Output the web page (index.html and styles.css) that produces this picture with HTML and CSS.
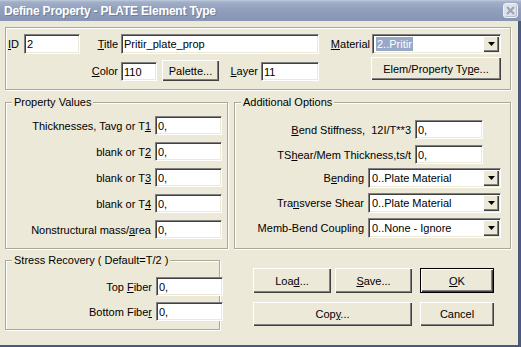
FILE: index.html
```html
<!DOCTYPE html>
<html lang="en">

<head>
    <meta charset="UTF-8">
    <title>Define Property - PLATE Element Type</title>
    <link rel="stylesheet" href="styles.css">
</head>

<body>
    <div class="window">
        <div class="titlebar">
            <span class="caption">Define Property - PLATE Element Type</span>
            <span class="close-btn">
                <svg width="9" height="9" viewBox="0 0 9 9"><path d="M1 1 L8 8 M8 1 L1 8" stroke="#9aa4b6" stroke-width="2" /></svg>
            </span>
        </div>

        <div class="client">
            <!-- ID / title / material -->
            <div class="group top-group">
                <div class="row row-1">
                    <label class="lbl lbl-id"><u>I</u>D</label>
                    <input class="edit w-id" type="text" value="2">
                    <label class="lbl lbl-title"><u>T</u>itle</label>
                    <input class="edit w-title" type="text" value="Pritir_plate_prop">
                    <label class="lbl lbl-material"><u>M</u>aterial</label>
                    <div class="combo w-material">
                        <span class="combo-text"><span class="selected">2..Pritir</span></span>
                        <span class="combo-btn"><svg width="7" height="4" viewBox="0 0 7 4"><path d="M0 0 H7 L3.5 4 Z" fill="#000" /></svg></span>
                    </div>
                </div>
                <div class="row row-2">
                    <label class="lbl lbl-color"><u>C</u>olor</label>
                    <input class="edit w-color" type="text" value="110">
                    <button class="btn btn-palette">Palette...</button>
                    <label class="lbl lbl-layer"><u>L</u>ayer</label>
                    <input class="edit w-layer" type="text" value="11">
                    <button class="btn btn-elem">Elem/Property Ty<u>p</u>e...</button>
                </div>
            </div>

            <div class="middle">
                <fieldset class="group prop-values">
                    <legend>Property Values</legend>
                    <div class="field-rows">
                        <div class="field-row"><label>Thicknesses, Tavg or T<u>1</u></label><input class="edit w-val" type="text" value="0,"></div>
                        <div class="field-row"><label>blank or T<u>2</u></label><input class="edit w-val" type="text" value="0,"></div>
                        <div class="field-row"><label>blank or T<u>3</u></label><input class="edit w-val" type="text" value="0,"></div>
                        <div class="field-row"><label>blank or T<u>4</u></label><input class="edit w-val" type="text" value="0,"></div>
                        <div class="field-row"><label>Nonstructural mass/<u>a</u>rea</label><input class="edit w-val" type="text" value="0,"></div>
                    </div>
                </fieldset>

                <fieldset class="group add-options">
                    <legend>Additional Options</legend>
                    <div class="field-rows opt-rows">
                        <div class="field-row"><label><u>B</u>end Stiffness,&nbsp; 12I/T**3</label><input class="edit w-opt" type="text" value="0,"></div>
                        <div class="field-row"><label>TS<u>h</u>ear/Mem Thickness,ts/t</label><input class="edit w-opt" type="text" value="0,"></div>
                        <div class="field-row first-combo">
                            <label>B<u>e</u>nding</label>
                            <div class="combo w-opt-combo">
                                <span class="combo-text">0..Plate Material</span>
                                <span class="combo-btn"><svg width="7" height="4" viewBox="0 0 7 4"><path d="M0 0 H7 L3.5 4 Z" fill="#000" /></svg></span>
                            </div>
                        </div>
                        <div class="field-row">
                            <label>Tra<u>n</u>sverse Shear</label>
                            <div class="combo w-opt-combo">
                                <span class="combo-text">0..Plate Material</span>
                                <span class="combo-btn"><svg width="7" height="4" viewBox="0 0 7 4"><path d="M0 0 H7 L3.5 4 Z" fill="#000" /></svg></span>
                            </div>
                        </div>
                        <div class="field-row">
                            <label>Memb-Bend Coupling</label>
                            <div class="combo w-opt-combo">
                                <span class="combo-text">0..None - Ignore</span>
                                <span class="combo-btn"><svg width="7" height="4" viewBox="0 0 7 4"><path d="M0 0 H7 L3.5 4 Z" fill="#000" /></svg></span>
                            </div>
                        </div>
                    </div>
                </fieldset>
            </div>

            <div class="bottom">
                <fieldset class="group stress">
                    <legend>Stress Recovery ( Default=T/2 )</legend>
                    <div class="field-rows stress-rows">
                        <div class="field-row"><label>Top <u>F</u>iber</label><input class="edit w-val" type="text" value="0,"></div>
                        <div class="field-row"><label>Bottom Fibe<u>r</u></label><input class="edit w-val" type="text" value="0,"></div>
                    </div>
                </fieldset>

                <div class="buttons">
                    <button class="btn">Loa<u>d</u>...</button>
                    <button class="btn"><u>S</u>ave...</button>
                    <button class="btn btn-default btn-right"><u>O</u>K</button>
                    <button class="btn btn-copy">Cop<u>y</u>...</button>
                    <button class="btn btn-right">Cancel</button>
                </div>
            </div>
        </div>
    </div>
</body>

</html>
```

FILE: styles.css
```css
body {
    margin: 0;
    padding: 0;
    font-family: "Liberation Sans", Arial, sans-serif;
    font-size: 11px;
    color: #000000;
    background-color: #ece9d8;
}

.window {
    width: 521px;
    height: 347px;
    display: flex;
    flex-direction: column;
    overflow: hidden;
}

/* title bar */
.titlebar {
    flex: none;
    height: 21px;
    display: flex;
    align-items: center;
    justify-content: space-between;
    padding: 0 3px 0 4px;
    background: linear-gradient(#c3cbdc 0, #a2afc8 2px, #919fbc 45%, #8796b4 100%);
}

.caption {
    color: #ffffff;
    font-weight: bold;
    font-size: 12px;
    letter-spacing: -0.2px;
    text-shadow: 1px 1px 0 #6f7d99;
}

.close-btn {
    width: 15px;
    height: 15px;
    box-sizing: border-box;
    display: flex;
    align-items: center;
    justify-content: center;
    border: 1px solid #eef0f4;
    border-radius: 3px;
    background: #dde1e9;
    box-shadow: inset -1px -1px 0 #b9c0cd;
}

.client {
    flex: 1;
    border-right: 3px solid #4b5a7a;
    border-bottom: 2px solid #4b5a7a;
    padding: 6px 0 0 5px;
}

/* etched group boxes */
.group {
    box-sizing: border-box;
    margin: 0;
    padding: 0;
    min-width: 0;
    border: 1px solid #aca899;
    box-shadow: 1px 1px 0 #ffffff, inset 1px 1px 0 #ffffff;
}

.group legend {
    margin-left: 6px;
    padding: 0 2px;
    line-height: 13px;
    background-color: #ece9d8;
}

/* sunken edit fields */
.edit {
    box-sizing: border-box;
    height: 19px;
    margin: 0;
    padding: 0 2px;
    font-family: "Liberation Sans", Arial, sans-serif;
    font-size: 11px;
    color: #000000;
    background: #ffffff;
    border: 1px solid;
    border-color: #808080 #ffffff #ffffff #808080;
    box-shadow: inset 1px 1px 0 #404040, inset -1px -1px 0 #ece9d8;
    outline: none;
}

.combo {
    box-sizing: border-box;
    height: 20px;
    display: flex;
    align-items: stretch;
    background: #ffffff;
    border: 1px solid;
    border-color: #808080 #ffffff #ffffff #808080;
    box-shadow: inset 1px 1px 0 #404040, inset -1px -1px 0 #ece9d8;
    padding: 1px;
}

.combo-text {
    flex: 1;
    display: flex;
    align-items: center;
    padding-left: 2px;
}

.selected {
    background: #98a8c8;
    color: #ffffff;
    padding: 0 1px;
    line-height: 14px;
}

.combo-btn {
    width: 16px;
    box-sizing: border-box;
    display: flex;
    align-items: center;
    justify-content: center;
    background: #ece9d8;
    box-shadow: inset 1px 1px 0 #ffffff, inset -1px -1px 0 #404040, inset -2px -2px 0 #808080;
}

/* raised push buttons */
.btn {
    box-sizing: border-box;
    margin: 0;
    padding: 0;
    font-family: "Liberation Sans", Arial, sans-serif;
    font-size: 11px;
    color: #000000;
    background: #ece9d8;
    border: none;
    box-shadow: inset 1px 1px 0 #ffffff, inset -1px -1px 0 #404040, inset -2px -2px 0 #808080;
}

.btn-default {
    border: 1px solid #000000;
}

/* top group */
.top-group {
    width: 506px;
    height: 63px;
    padding-top: 6px;
}

.row {
    display: flex;
    align-items: flex-start;
}

.lbl {
    box-sizing: border-box;
    line-height: 19px;
    text-align: right;
    padding-right: 3px;
}

.row-1 .edit {
    height: 20px;
}

.row-1 .lbl {
    line-height: 20px;
}

.lbl-id {
    width: 18px;
    text-align: left;
    padding-left: 2px;
}

.w-id {
    width: 56px;
}

.lbl-title {
    width: 41px;
}

.w-title {
    width: 198px;
}

.lbl-material {
    width: 53px;
    padding-right: 2px;
}

.w-material {
    width: 129px;
}

.row-2 {
    margin-top: 3px;
}

.row-2 .lbl,
.row-2 .edit {
    margin-top: 5px;
}

.lbl-color {
    width: 115px;
}

.w-color {
    width: 36px;
}

.btn-palette {
    width: 57px;
    height: 21px;
    margin-left: 5px;
    margin-top: 3px;
}

.lbl-layer {
    width: 42px;
}

.w-layer {
    width: 58px;
}

.btn-elem {
    width: 130px;
    height: 23px;
    margin-left: 52px;
}

/* property + options groups */
.middle {
    display: flex;
    margin-top: 6px;
}

.prop-values {
    width: 223px;
    height: 153px;
}

.add-options {
    width: 277px;
    height: 153px;
    margin-left: 6px;
}

.field-rows {
    display: flex;
    flex-direction: column;
    gap: 7px;
    padding: 7px 5px 0 0;
}

.field-row {
    display: flex;
    justify-content: flex-end;
    align-items: center;
    height: 19px;
}

.field-row label {
    margin-right: 4px;
}

.w-val {
    width: 67px;
}

.opt-rows {
    gap: 6px;
    padding: 11px 9px 0 0;
}

.w-opt {
    width: 68px;
    margin-right: 18px;
}

.first-combo {
    margin-top: -2px;
}

.w-opt-combo {
    width: 133px;
}

/* stress recovery + buttons */
.bottom {
    display: flex;
    align-items: flex-start;
}

.stress {
    width: 215px;
    height: 76px;
    margin-top: 5px;
}

.stress-rows {
    gap: 6px;
    padding: 10px 0 0 0;
}

.stress-rows .edit {
    margin-right: -4px;
}

.buttons {
    display: grid;
    grid-template-columns: 78px 77px 78px;
    grid-template-rows: 25px 24px;
    column-gap: 4px;
    row-gap: 9px;
    margin-left: 33px;
    margin-top: 19px;
}

.btn-right {
    margin-left: 4px;
}

.btn-copy {
    grid-column: 1 / 3;
}
```
